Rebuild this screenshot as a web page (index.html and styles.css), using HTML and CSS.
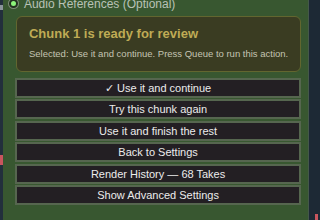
FILE: index.html
```html
<!DOCTYPE html>
<html lang="en">
<head>
    <meta charset="UTF-8">
    <meta name="viewport" content="width=device-width, initial-scale=1.0">
    <title>Chunk Review</title>
    <link rel="stylesheet" href="styles.css">
</head>
<body>
    <div class="frame">
        <div class="side-left">
            <span class="grip"></span>
            <span class="mark"></span>
        </div>

        <div class="panel">
            <div class="field-label">
                <span class="radio"></span>
                Audio References (Optional)
            </div>

            <div class="review-card">
                <div class="review-title">Chunk 1 is ready for review</div>
                <div class="review-note">Selected: Use it and continue. Press Queue to run this action.</div>
            </div>

            <div class="actions">
                <button class="action">✓ Use it and continue</button>
                <button class="action">Try this chunk again</button>
                <button class="action">Use it and finish the rest</button>
                <button class="action">Back to Settings</button>
                <button class="action">Render History — 68 Takes</button>
                <button class="action">Show Advanced Settings</button>
            </div>
        </div>

        <div class="side-right">
            <span class="mark"></span>
        </div>
    </div>
</body>
</html>
```

FILE: styles.css
```css
html, body {
    margin: 0;
    height: 100%;
    overflow: hidden;
}
body {
    font-family: "Liberation Sans", Arial, sans-serif;
    background-color: #1e2a36;
}
.frame {
    display: flex;
    height: 220px;
}
.side-left {
    width: 3px;
    background-color: #222f3c;
    position: relative;
}
.side-left .grip {
    position: absolute;
    left: 0;
    top: 5px;
    width: 3px;
    height: 5px;
    background-color: #8a949a;
}
.side-left .mark {
    position: absolute;
    left: 0;
    top: 155px;
    width: 3px;
    height: 10px;
    background-color: #c8555e;
}
.side-right {
    width: 11px;
    background-color: #1d2935;
    border-left: 1px solid #44584a;
    position: relative;
}
.side-right .mark {
    position: absolute;
    left: 6px;
    top: 214px;
    width: 3px;
    height: 6px;
    background-color: #c8555e;
}
.panel {
    flex: 1;
    background-color: #385730;
    padding: 0 7px 0 12px;
}
.field-label {
    display: flex;
    align-items: center;
    gap: 6px;
    margin-top: -5px;
    margin-left: -6px;
    height: 17px;
    font-size: 12px;
    color: #b9c2b6;
    white-space: nowrap;
}
.radio {
    width: 5px;
    height: 5px;
    border-radius: 50%;
    background-color: #8cf27a;
    border: 2px solid #22301f;
    box-shadow: 0 0 0 1px #7a8a74;
}
.review-card {
    margin: 4px 0 6px 1px;
    padding: 9px 12px 11px 12px;
    background-color: #3a3c22;
    border: 1px solid #62662f;
    border-radius: 6px;
}
.review-title {
    font-size: 13px;
    line-height: 15px;
    font-weight: bold;
    color: #bfab55;
}
.review-note {
    margin-top: 7px;
    font-size: 9.5px;
    line-height: 12px;
    color: #c4c4b2;
    white-space: nowrap;
}
.actions {
    display: flex;
    flex-direction: column;
    gap: 1.4px;
}
.action {
    height: 20px;
    padding: 0;
    font-family: inherit;
    font-size: 11px;
    color: #ececec;
    background-color: #231f23;
    border: 2px solid #56664f;
    text-align: center;
}
```
